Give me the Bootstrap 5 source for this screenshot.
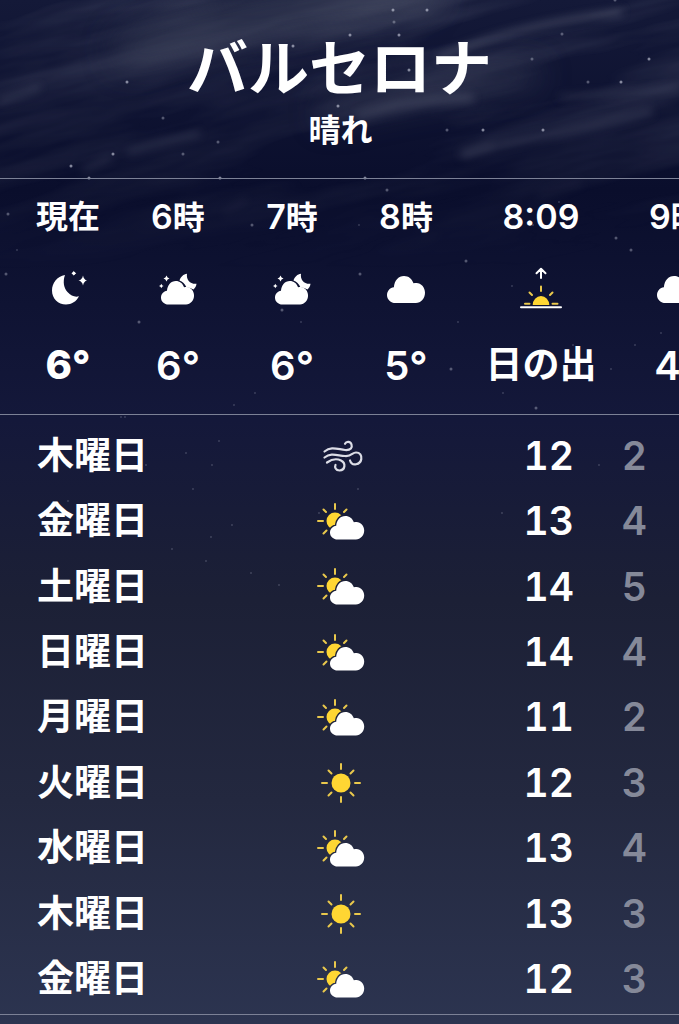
<!DOCTYPE html>
<html lang="ja">
<head>
<meta charset="utf-8">
<meta name="viewport" content="width=device-width, initial-scale=1">
<title>バルセロナ</title>
<link href="https://cdn.jsdelivr.net/npm/bootstrap@5.3.0/dist/css/bootstrap.min.css" rel="stylesheet">
<style>
  body {
    font-family: Inter, "Noto Sans CJK JP", sans-serif;
    font-weight: 500;
    color: #fff;
    background: #2c3450;
  }
  .weather {
    background: linear-gradient(#141938 0, #0a0e2c 190px, #14183a 420px, #1c2036 600px, #23283f 800px, #2c3450 100%);
    isolation: isolate;
  }
  .sky { z-index: -1; height: 600px; }
  .rule { border-color: #7c8196 !important; }
  .city { font-size: 61px; line-height: 76px; font-weight: 600; padding-top: 31px; }
  .condition { font-size: 32px; line-height: 48px; height: 71px; padding-left: 2px; font-weight: 600; }
  .hours { padding: 16px 0 0 15px; height: 236px; }
  .hour { width: 114px; }
  .hour-now { width: 106px; font-weight: 700; }
  .hour-sun { width: 156px; }
  .time { font-size: 34px; line-height: 44px; font-weight: 600; }
  .kanji { font-size: 32px; }
  .glyph { height: 102px; padding-bottom: 4px; }
  .temp { font-size: 40px; line-height: 48px; font-weight: 600; }
  .hour-now .temp { font-weight: 800; }
  .event { font-size: 37px; }
  .days { padding: 8px 0 2px; }
  .days table { font-variant-numeric: tabular-nums; line-height: 48px; }
  .day { font-size: 37px; padding-left: 37px; font-weight: 600; }
  .pic { width: 27%; }
  .high { width: 142px; font-size: 39px; font-weight: 600; }
  .low { width: 104px; font-size: 39px; font-weight: 600; padding-right: 32px; color: #858999; }
  .foot { height: 9px; }
</style>
</head>
<body>
<svg width="0" height="0" class="position-absolute" aria-hidden="true">
  <defs>
    <path id="cloud-shape" d="M8.500 27C3.800 27 0 23.500 0 19.200C0 15 3 11.800 6.900 11.300C7.300 4.800 11.400 0 17 0C21.600 0 25 2.800 26.500 7.300C27.500 7 28.500 6.900 29.500 6.900C34 6.900 38 11.200 38 16.800C38 22.500 34 27 28.800 27Z"/>
    <symbol id="cloud" viewBox="0 0 38 27"><use href="#cloud-shape" fill="#fff"/></symbol>
    <symbol id="moon" viewBox="0 0 38 36">
      <path fill="#fff" d="M16 5C13.500 12 15 18 18.500 22C22 26 26 27.400 30 26.300C27.500 31.500 22.500 34.500 17 34.500C9 34.500 3 28.500 3 20.500C3 13 8 6.500 16 5Z"/>
      <path fill="#fff" d="M34 5.500Q34.800 9.700 38 10.500Q34.800 11.300 34 15.500Q33.200 11.300 29.500 10.500Q33.200 9.700 34 5.500Z"/>
      <circle cx="24.800" cy="3.300" r="1.600" fill="#fff"/><path fill="#fff" d="M24.800 .8L26 3.300L24.800 5.800L23.600 3.300ZM22.300 3.300L24.800 2.100L27.300 3.300L24.800 4.500Z"/>
    </symbol>
    <symbol id="cloud-moon" viewBox="0 0 38 32">
      <path fill="#fff" d="M28 .8C27 7 31.500 11.500 37.500 10.800C37.300 13 36 15.200 34.500 16.500C32 15 29.500 14.300 27.500 14.500C26 11 23.500 8.500 20.500 7.500C21.500 4 24.500 1.200 28 .8Z"/>
      <use href="#cloud-shape" fill="#fff" transform="translate(2 8) scale(.87)"/>
      <path fill="#fff" d="M7.500 2.500Q8.200 4.800 10.500 5.500Q8.200 6.200 7.500 8.500Q6.800 6.200 4.500 5.500Q6.800 4.800 7.500 2.500ZM2.300 10.700Q2.800 12.500 4.600 13Q2.800 13.500 2.300 15.300Q1.800 13.500 0 13Q1.800 12.500 2.300 10.700Z"/>
    </symbol>
    <symbol id="sun" viewBox="-20 -20 40 40">
      <circle r="9.500" fill="#ffd633"/>
      <path fill="none" stroke="#e9c84c" stroke-width="2" stroke-linecap="round" d="M0-19V-14M0 19V14M-19 0H-14M19 0H14M-12.500-12.500L-9.500-9.500M12.500-12.500L9.500-9.500M-12.500 12.500L-9.500 9.500M12.500 12.500L9.500 9.500"/>
    </symbol>
    <mask id="cloud-gap" maskUnits="userSpaceOnUse" x="0" y="0" width="48" height="37">
      <path fill="#fff" d="M0 0H48V37H0Z"/>
      <use href="#cloud-shape" fill="#000" stroke="#000" stroke-width="3.500" transform="translate(13 13) scale(.9 .87)"/>
    </mask>
    <symbol id="cloud-sun" viewBox="0 0 48 37">
      <circle cx="18" cy="18" r="8.500" fill="#ffd633" mask="url(#cloud-gap)"/>
      <path fill="none" stroke="#e9c84c" stroke-width="2" stroke-linecap="round" d="M18 1V6M1 18H6M6.500 6.500L9 9M29.500 6.500L27 9M6.500 30.500L9.500 27.500"/>
      <use href="#cloud-shape" fill="#fff" transform="translate(13 13) scale(.9 .87)"/>
    </symbol>
    <symbol id="wind" viewBox="-4 0 44 32">
      <path fill="none" stroke="#dcdde6" stroke-width="2.200" stroke-linecap="round" d="M1.500 11.500C8 6 14 9 22 10C28 10.500 29.500 7.500 28.500 4.500C27.500 1.300 23.500 .8 22 3.800M1.500 17.500C8 12.500 14 15.500 22 16C29 16.500 29 12.500 33 12.500C37 12.500 38.800 15.500 38.300 19C37.500 24.500 29 27 27 20.500M4 22.500C9 19 14 18.500 18 20.500C23 23 22.500 30 16.500 30.500C12.500 30.500 11.500 27 12.500 25"/>
    </symbol>
    <symbol id="sunrise" viewBox="0 0 42 42">
      <path fill="none" stroke="#fff" stroke-width="2" stroke-linecap="round" stroke-linejoin="round" d="M21 11V2M16.500 6.200L21 1.700L25.500 6.200"/>
      <path fill="#ffd633" d="M12.700 38A8.300 9 0 0 1 29.300 38Z"/>
      <path fill="none" stroke="#e9c84c" stroke-width="2" stroke-linecap="round" d="M21 19.500V24M9.500 25.500L12 28M32.500 25.500L30 28M5 36.800H9.500M32.500 36.800H37.500"/>
      <path stroke="#fff" stroke-width="2" stroke-linecap="round" d="M1 40.200H41"/>
    </symbol>
    <filter id="soft" x="-50%" y="-150%" width="200%" height="400%"><feGaussianBlur stdDeviation="16"/></filter>
    <filter id="wisp" x="-20%" y="-80%" width="140%" height="260%"><feGaussianBlur stdDeviation="4"/></filter>
    <filter id="streaks" x="0" y="0" width="100%" height="100%">
      <feTurbulence type="fractalNoise" baseFrequency=".004 .024" numOctaves="4" seed="8"/>
      <feColorMatrix values="0 0 0 0 .36  0 0 0 0 .38  0 0 0 0 .46  1.500 0 0 0 -.55"/>
    </filter>
    <linearGradient id="fade" x2="0" y2="1"><stop stop-color="#fff"/><stop offset=".6" stop-color="#888"/><stop offset="1" stop-color="#000"/></linearGradient>
    <mask id="sky-fade" maskUnits="userSpaceOnUse" x="0" y="0" width="679" height="270"><path fill="url(#fade)" d="M0 0H679V270H0Z"/></mask>
  </defs>
</svg>

<main class="weather position-relative d-flex flex-column min-vh-100 overflow-hidden">
  <svg class="sky position-absolute top-0 start-0 w-100" viewBox="0 0 679 600" preserveAspectRatio="xMidYMin slice" aria-hidden="true">
    <g mask="url(#sky-fade)">
      <g transform="rotate(-14 340 120)"><path d="M-100-150H800V400H-100Z" filter="url(#streaks)" opacity=".32"/></g>
      <g fill="none" stroke="#4a4f63" stroke-linecap="round" filter="url(#soft)" opacity=".6">
        <path stroke-width="36" d="M130 50Q250 10 420-8"/>
        <path stroke-width="22" d="M330 112Q420 88 530 76"/>
      </g>
      <g fill="none" stroke="#686c80" stroke-linecap="round" filter="url(#wisp)" opacity=".55">
        <path stroke-width="6" d="M440 58Q500 28 620 12"/>
        <path stroke-width="8" d="M360 116Q420 98 470 98"/>
        <path stroke-width="6" d="M470 152Q560 132 650 112"/>
        <path stroke-width="10" d="M465 154L490 147"/>
        <path stroke-width="5" d="M0 101L38 88M130 152L198 134M85 170L110 158"/>
        <path stroke-width="3" d="M560 97L678 88M380 252Q420 248 436 236M225 214L245 200M540 195L580 183"/>
      </g>
    </g>
    <g fill="none" stroke="#c3c6d6" stroke-linecap="round" stroke-width="3" opacity=".65">
      <path d="M127 82h0M113 154h0M71 166h0M89 178h0M220 178h0M293 46h0M338 106h0M393 10h0M427 10h0M350 35h0M399 35h0M649 59h0M621 82h0M483 130h0M543 130h0M365 178h0M409 70h0"/>
      <path opacity=".6" d="M163 118h0M218 142h0M183 154h0M394 22h0M562 34h0M532 59h0M588 82h0M447 130h0M615 0h0M8 214h0M6 274h0M139 322h0M252 225h0M360 274h0M387 190h0M282 310h0M466 261h0M616 238h0M631 250h0M451 369h0M536 408h0"/>
      <path opacity=".35" stroke-width="2" d="M17 250h0M121 417h0M125 417h0M359 225h0M301 322h0M458 322h0M255 393h0M234 405h0M512 286h0M559 202h0M533 225h0M573 345h0M635 345h0M611 369h0M503 393h0M661 333h0M219 441h0M186 453h0M212 465h0M193 489h0M232 525h0M211 537h0M172 549h0M206 561h0M251 573h0M279 585h0M146 465h0M68 501h0M319 513h0M358 489h0M599 465h0M502 513h0"/>
    </g>
  </svg>

  <header class="text-center border-bottom rule">
    <h1 class="city m-0">バルセロナ</h1>
    <p class="condition m-0">晴れ</p>
  </header>

  <section class="hours d-flex overflow-hidden text-center text-nowrap border-bottom rule" aria-label="時間ごとの予報">
    <div class="hour-now flex-shrink-0">
      <div class="time kanji">現在</div>
      <div class="glyph d-flex align-items-center justify-content-center"><svg width="38" height="36" role="img" aria-label="晴れ"><use href="#moon"/></svg></div>
      <div class="temp">6°</div>
    </div>
    <div class="hour flex-shrink-0">
      <div class="time">6<span class="kanji">時</span></div>
      <div class="glyph d-flex align-items-center justify-content-center"><svg width="38" height="32" role="img" aria-label="曇り時々晴れ"><use href="#cloud-moon"/></svg></div>
      <div class="temp">6°</div>
    </div>
    <div class="hour flex-shrink-0">
      <div class="time">7<span class="kanji">時</span></div>
      <div class="glyph d-flex align-items-center justify-content-center"><svg width="38" height="32" role="img" aria-label="曇り時々晴れ"><use href="#cloud-moon"/></svg></div>
      <div class="temp">6°</div>
    </div>
    <div class="hour flex-shrink-0">
      <div class="time">8<span class="kanji">時</span></div>
      <div class="glyph d-flex align-items-center justify-content-center"><svg width="38" height="27" role="img" aria-label="曇り"><use href="#cloud"/></svg></div>
      <div class="temp">5°</div>
    </div>
    <div class="hour-sun flex-shrink-0">
      <div class="time">8:09</div>
      <div class="glyph d-flex align-items-center justify-content-center"><svg width="42" height="42" role="img" aria-label="日の出"><use href="#sunrise"/></svg></div>
      <div class="temp event">日の出</div>
    </div>
    <div class="hour flex-shrink-0">
      <div class="time">9<span class="kanji">時</span></div>
      <div class="glyph d-flex align-items-center justify-content-center"><svg width="38" height="27" role="img" aria-label="曇り"><use href="#cloud"/></svg></div>
      <div class="temp">4°</div>
    </div>
  </section>

  <section class="days d-flex flex-column flex-grow-1 border-bottom rule" aria-label="週間予報">
    <table class="w-100 flex-grow-1">
      <tbody>
        <tr><th class="day" scope="row">木曜日</th><td class="pic"><svg class="d-block mx-auto" width="44" height="32" role="img" aria-label="風"><use href="#wind"/></svg></td><td class="high text-end">12</td><td class="low text-end">2</td></tr>
        <tr><th class="day" scope="row">金曜日</th><td class="pic"><svg class="d-block mx-auto" width="48" height="37" role="img" aria-label="晴れ時々曇り"><use href="#cloud-sun"/></svg></td><td class="high text-end">13</td><td class="low text-end">4</td></tr>
        <tr><th class="day" scope="row">土曜日</th><td class="pic"><svg class="d-block mx-auto" width="48" height="37" role="img" aria-label="晴れ時々曇り"><use href="#cloud-sun"/></svg></td><td class="high text-end">14</td><td class="low text-end">5</td></tr>
        <tr><th class="day" scope="row">日曜日</th><td class="pic"><svg class="d-block mx-auto" width="48" height="37" role="img" aria-label="晴れ時々曇り"><use href="#cloud-sun"/></svg></td><td class="high text-end">14</td><td class="low text-end">4</td></tr>
        <tr><th class="day" scope="row">月曜日</th><td class="pic"><svg class="d-block mx-auto" width="48" height="37" role="img" aria-label="晴れ時々曇り"><use href="#cloud-sun"/></svg></td><td class="high text-end">11</td><td class="low text-end">2</td></tr>
        <tr><th class="day" scope="row">火曜日</th><td class="pic"><svg class="d-block mx-auto" width="40" height="40" role="img" aria-label="晴れ"><use href="#sun"/></svg></td><td class="high text-end">12</td><td class="low text-end">3</td></tr>
        <tr><th class="day" scope="row">水曜日</th><td class="pic"><svg class="d-block mx-auto" width="48" height="37" role="img" aria-label="晴れ時々曇り"><use href="#cloud-sun"/></svg></td><td class="high text-end">13</td><td class="low text-end">4</td></tr>
        <tr><th class="day" scope="row">木曜日</th><td class="pic"><svg class="d-block mx-auto" width="40" height="40" role="img" aria-label="晴れ"><use href="#sun"/></svg></td><td class="high text-end">13</td><td class="low text-end">3</td></tr>
        <tr><th class="day" scope="row">金曜日</th><td class="pic"><svg class="d-block mx-auto" width="48" height="37" role="img" aria-label="晴れ時々曇り"><use href="#cloud-sun"/></svg></td><td class="high text-end">12</td><td class="low text-end">3</td></tr>
      </tbody>
    </table>
  </section>
  <div class="foot"></div>
</main>
<script src="https://cdn.jsdelivr.net/npm/bootstrap@5.3.0/dist/js/bootstrap.bundle.min.js"></script>
</body>
</html>
